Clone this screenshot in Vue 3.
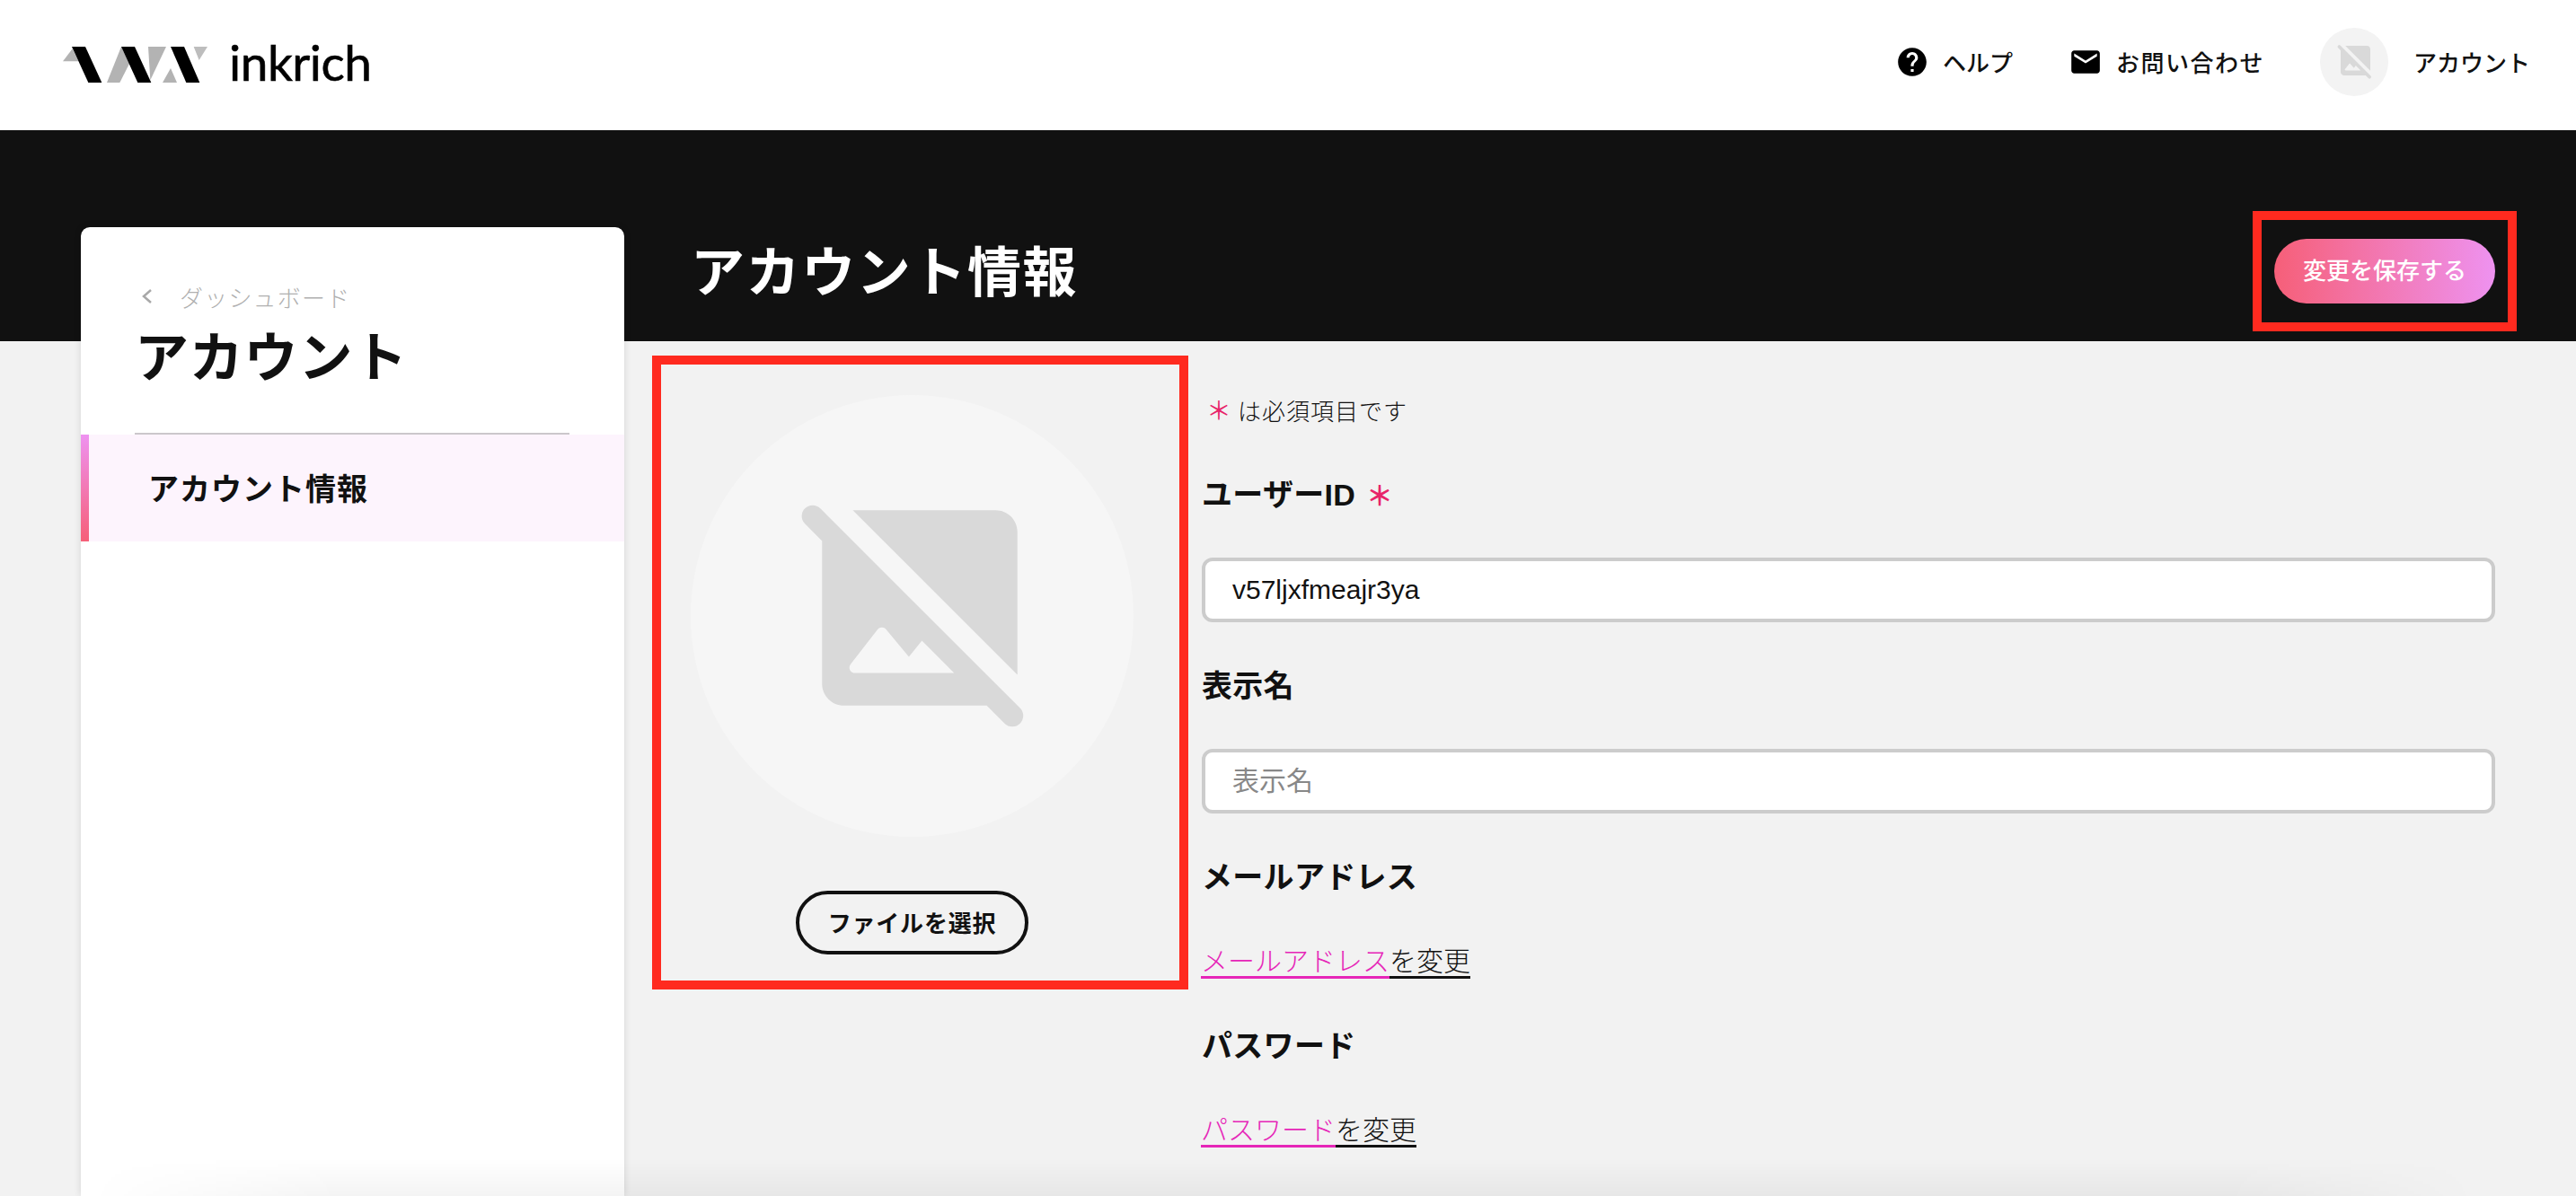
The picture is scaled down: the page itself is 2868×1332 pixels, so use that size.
<template>
  <div class="app">
    <header class="topbar">
      <a class="logo">
        <svg class="logo-mark" viewBox="60 93 483 120">
          <path fill="#b3b3b3" d="M60 142 92 100 112 142z" />
          <path fill="#b3b3b3" d="M255 93 207 213H250L282 150z" />
          <path fill="#b3b3b3" d="M345 93H405L352 205z" />
          <path fill="#b3b3b3" d="M393 213 420 165 441 213z" />
          <path fill="#bdbdbd" d="M497 93H543L515 138z" />
          <path fill="#000" d="M90 93H135L190 213H145z" />
          <path fill="#000" d="M255 93H300L355 213H310z" />
          <path fill="#000" d="M420 93H465L517 213H472z" />
        </svg>
        <span class="logo-text">inkrich</span>
      </a>
      <nav class="topnav">
        <a class="topnav-item">
          <svg class="topnav-icon" viewBox="0 0 24 24"><path :d="helpPath" /></svg>
          ヘルプ
        </a>
        <a class="topnav-item contact">
          <svg class="topnav-icon" viewBox="0 0 24 24"><path :d="mailPath" /></svg>
          お問い合わせ
        </a>
        <a class="topnav-item account">
          <span class="account-pic">
            <svg class="account-icon" viewBox="0 0 24 24"><path fill-rule="evenodd" :d="noImagePath" /></svg>
          </span>
          アカウント
        </a>
      </nav>
    </header>

    <div class="page">
      <aside class="sidebar">
        <div class="side-head">
          <a class="back">
            <svg class="back-icon" viewBox="0 0 14 20"><path d="M11 3 3 10l8 7" /></svg>
            ダッシュボード
          </a>
          <h2 class="side-title">アカウント</h2>
        </div>
        <a class="side-item">アカウント情報</a>
      </aside>

      <main class="main">
        <div class="hero">
          <h1 class="hero-title">アカウント情報</h1>
          <div class="save-wrap">
            <button class="save-btn">変更を保存する</button>
            <span class="mark mark-save"></span>
          </div>
        </div>

        <div class="content">
          <section class="avatar-col">
            <div class="avatar">
              <svg class="avatar-icon" viewBox="0 0 24 24"><path fill-rule="evenodd" :d="noImagePath" /></svg>
            </div>
            <button class="file-btn">ファイルを選択</button>
            <span class="mark mark-avatar"></span>
          </section>

          <form class="form" @submit.prevent>
            <p class="note"><span class="req">＊</span>は必須項目です</p>
            <div class="field first">
              <label class="label">ユーザーID <span class="req-label">＊</span></label>
              <input class="input" type="text" value="v57ljxfmeajr3ya" />
            </div>
            <div class="field">
              <label class="label">表示名</label>
              <input class="input" type="text" placeholder="表示名" />
            </div>
            <div class="field link-field">
              <label class="label">メールアドレス</label>
              <a class="change"><span class="change-link">メールアドレス</span>を変更</a>
            </div>
            <div class="field link-field">
              <label class="label">パスワード</label>
              <a class="change"><span class="change-link">パスワード</span>を変更</a>
            </div>
          </form>
        </div>
      </main>
    </div>

    <div class="bottom-fade"></div>
  </div>
</template>

<script setup>
const helpPath = 'M12 2C6.48 2 2 6.48 2 12s4.48 10 10 10 10-4.48 10-10S17.52 2 12 2zm1 17h-2v-2h2v2zm2.07-7.75l-.9.92C13.45 12.9 13 13.5 13 15h-2v-.5c0-1.1.45-2.1 1.17-2.83l1.24-1.26c.37-.36.59-.86.59-1.41 0-1.1-.9-2-2-2s-2 .9-2 2H8c0-2.21 1.79-4 4-4s4 1.79 4 4c0 .88-.36 1.68-.93 2.25z'
const mailPath = 'M20 4H4c-1.1 0-1.99.9-1.99 2L2 18c0 1.1.9 2 2 2h16c1.1 0 2-.9 2-2V6c0-1.1-.9-2-2-2zm0 4l-8 5-8-5V6l8 5 8-5v2z'
// picture-off icon: top right corner piece, then the slash joined to the lower left piece, then the mountains cut out
const noImagePath = 'M21 18.17V5c0-1.1-.9-2-2-2H5.83L21 18.17zM2.84 2.83 21.24 21.23A1 1 0 0 1 19.82 22.65L18.17 21H5c-1.1 0-2-.9-2-2V5.83L1.42 4.25A1 1 0 0 1 2.84 2.83zM6.02 18c-.42 0-.65-.48-.39-.81l2.49-3.2c.2-.25.58-.26.78-.01L11 16.51l1.2-1.48L15.17 18H6.02z'
</script>

<style>
html, body {
  margin: 0;
  background: #f2f2f2;
}
</style>

<style scoped>
.app {
  position: relative;
  width: 2868px;
  height: 1332px;
  overflow: hidden;
  background: #f2f2f2;
  color: #111;
  font-family: "Noto Sans CJK JP", "Noto Sans", sans-serif;
}

.topbar {
  display: flex;
  align-items: center;
  justify-content: space-between;
  height: 145px;
  padding: 0 51px 0 70px;
  box-sizing: border-box;
  background: #fff;
}

.logo {
  display: flex;
  align-items: center;
  gap: 24px;
}

.logo-mark {
  width: 161px;
  height: 40px;
  margin-top: -1px;
}

.logo-text {
  font-family: "Lato", sans-serif;
  font-size: 55px;
  line-height: 60px;
  letter-spacing: -0.5px;
  color: #000;
  -webkit-text-stroke: 0.6px #000;
  margin-top: -8px;
}

.topnav {
  display: flex;
  align-items: center;
  gap: 62px;
  margin-bottom: 8px;
  font-size: 26px;
  font-weight: 500;
  color: #111;
}

.topnav-item {
  display: flex;
  align-items: center;
  gap: 15px;
}

.contact {
  letter-spacing: 1.5px;
}

.topnav-icon {
  width: 38px;
  height: 38px;
  fill: #000;
}

.account {
  gap: 28px;
}

.account-pic {
  display: flex;
  align-items: center;
  justify-content: center;
  width: 76px;
  height: 76px;
  border-radius: 50%;
  background: #f3f3f3;
}

.account-icon {
  width: 44px;
  height: 44px;
  fill: #d9d9d9;
  transform: translate(1.5px, -1.5px);
}

.page {
  display: flex;
  height: 1187px;
  padding: 108px 0 0 90px;
  box-sizing: border-box;
  background: linear-gradient(#111 235px, #f2f2f2 235px);
}

.sidebar {
  flex: none;
  width: 605px;
  background: #fff;
  border-radius: 10px 10px 0 0;
  box-shadow: 0 0 8px rgba(0, 0, 0, 0.12);
}

.side-head {
  margin: 0 61px 0 60px;
  padding-top: 59px;
  height: 231px;
  box-sizing: border-box;
  border-bottom: 2px solid #cbc7cb;
}

.back {
  display: flex;
  align-items: center;
  gap: 29px;
  height: 36px;
  font-size: 26px;
  font-weight: 300;
  letter-spacing: 1.2px;
  color: #b0b0b0;
}

.back-icon {
  width: 14px;
  height: 20px;
  margin-left: 7px;
  fill: none;
  stroke: #a8a8a8;
  stroke-width: 2.5;
}

.side-title {
  margin: 10px 0 0;
  font-size: 60px;
  line-height: 72px;
  font-weight: 700;
  letter-spacing: 0.8px;
  color: #111;
}

.side-item {
  display: flex;
  align-items: center;
  position: relative;
  height: 119px;
  padding: 0 0 3px 75px;
  box-sizing: border-box;
  background: #fdf4fd;
  font-size: 34px;
  font-weight: 700;
  letter-spacing: 1px;
  color: #111;
}

.side-item::before {
  content: "";
  position: absolute;
  left: 0;
  top: 0;
  bottom: 0;
  width: 9px;
  background: linear-gradient(#ee92f0, #f65f78);
}

.main {
  flex: 1;
  padding: 0 90px 0 74px;
}

.hero {
  display: flex;
  align-items: center;
  justify-content: space-between;
  height: 127px;
  padding-bottom: 30px;
  box-sizing: border-box;
}

.hero-title {
  margin: -6px 0 0;
  font-size: 60px;
  font-weight: 700;
  line-height: 80px;
  letter-spacing: 1.6px;
  color: #fff;
}

.save-wrap {
  position: relative;
  display: flex;
}

.save-btn {
  width: 246px;
  height: 72px;
  padding: 0 0 4px;
  border: none;
  border-radius: 36px;
  background: linear-gradient(90deg, #f65f78, #ee92f0);
  color: #fff;
  font-family: inherit;
  font-size: 26px;
  font-weight: 500;
}

.mark {
  position: absolute;
  box-sizing: border-box;
  border: 10px solid #ff2a1f;
  pointer-events: none;
}

.mark-save {
  inset: -31px -24px;
}

.mark-avatar {
  inset: -44px -61px -39px -43px;
}

.content {
  display: flex;
  gap: 76px;
  padding-top: 60px;
}

.avatar-col {
  position: relative;
  flex: none;
  align-self: flex-start;
  display: flex;
  flex-direction: column;
  align-items: center;
  gap: 60px;
  width: 493px;
}

.avatar {
  display: flex;
  align-items: center;
  justify-content: center;
  width: 493px;
  height: 492px;
  border-radius: 50%;
  background: #f6f6f6;
}

.avatar-icon {
  width: 290px;
  height: 290px;
  fill: #d9d9d9;
  transform: translate(8px, -9px);
}

.file-btn {
  width: 259px;
  height: 71px;
  padding: 0 0 3px;
  border: 4px solid #111;
  border-radius: 36px;
  background: transparent;
  color: #111;
  font-family: inherit;
  font-size: 26px;
  font-weight: 700;
  letter-spacing: 0.8px;
}

.form {
  flex: 1;
  display: flex;
  flex-direction: column;
  gap: 47px;
  margin-top: -3px;
}

.note {
  display: flex;
  align-items: center;
  gap: 7px;
  margin: 0;
  height: 38px;
  padding-left: 5px;
  font-size: 26px;
  font-weight: 300;
  letter-spacing: 1px;
  color: #111;
}

.req {
  color: #e8246a;
  font-size: 28px;
  font-weight: 400;
  width: 28px;
  letter-spacing: 0;
}

.req-label {
  margin-left: 2px;
  color: #e8246a;
  font-size: 30px;
  font-weight: 700;
  line-height: 0;
}

.first {
  margin-top: 5px;
}

.field {
  display: flex;
  flex-direction: column;
  gap: 50px;
}

.link-field {
  margin-bottom: 6px;
}

.label {
  padding-top: 4px;
  font-family: "Liberation Sans", "Noto Sans CJK JP", sans-serif;
  font-size: 34px;
  font-weight: 700;
  line-height: 40px;
  letter-spacing: 0.3px;
  color: #111;
}

.input {
  height: 72px;
  padding: 0 30px;
  box-sizing: border-box;
  border: 4px solid #ccc;
  border-radius: 12px;
  background: #fff;
  color: #111;
  font-family: "Liberation Sans", "Noto Sans CJK JP", sans-serif;
  font-size: 30px;
  outline: none;
}

.input::placeholder {
  color: #888;
  font-family: "Noto Sans CJK JP", sans-serif;
}

.change {
  margin: 1px 0 0 -1px;
  font-size: 30px;
  font-weight: 300;
  line-height: 40px;
  color: #111;
  text-decoration: underline;
  text-decoration-thickness: 3px;
  text-underline-offset: 6px;
  text-decoration-skip-ink: none;
}

.change-link {
  color: #e626b8;
  text-decoration: underline;
  text-decoration-color: #e626b8;
  text-decoration-thickness: 3px;
  text-underline-offset: 6px;
  text-decoration-skip-ink: none;
}

.bottom-fade {
  position: absolute;
  left: 100px;
  right: 110px;
  bottom: 0;
  height: 42px;
  background: linear-gradient(rgba(0, 0, 0, 0), rgba(0, 0, 0, 0.045));
  -webkit-mask-image: linear-gradient(90deg, transparent, #000 280px, #000 calc(100% - 280px), transparent);
  mask-image: linear-gradient(90deg, transparent, #000 280px, #000 calc(100% - 280px), transparent);
  pointer-events: none;
}
</style>
